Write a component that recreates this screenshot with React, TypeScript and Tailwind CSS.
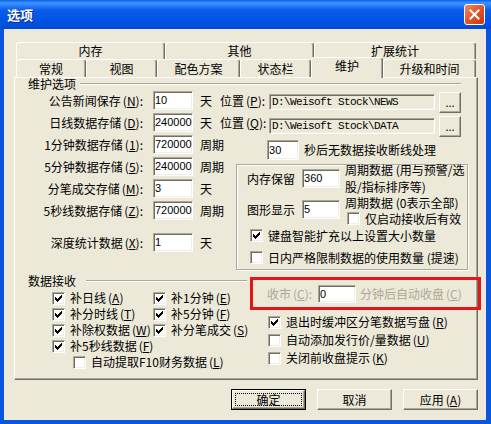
import React from "react";

const RAISED =
  "border border-t-white border-l-white border-r-[#716F64] border-b-[#716F64] shadow-[inset_-1px_-1px_0_#ACA899]";
const SUNKEN =
  "border border-t-[#ACA899] border-l-[#ACA899] border-r-white border-b-white shadow-[inset_1px_1px_0_#716F64,inset_-1px_-1px_0_#F1EFE2]";
const ETCH = "h-[2px] border-t border-t-[#ACA899] border-b border-b-white";
const TAB =
  "border-t border-l border-r border-t-white border-l-white border-r-[#716F64] rounded-t-[3px] shadow-[inset_-1px_0_0_#ACA899] flex justify-center whitespace-nowrap";

// mnemonic key, e.g. (N)
function K({ k }: { k: string }) {
  return (
    <span className="ml-[2px]">
      (<span className="underline underline-offset-[1px]">{k}</span>)
    </span>
  );
}

function Box({ on }: { on?: boolean }) {
  return (
    <span className={`w-[13px] h-[13px] shrink-0 bg-white flex items-center justify-center ${SUNKEN}`}>
      {on && (
        <svg width="7" height="7" viewBox="0 0 7 7" shapeRendering="crispEdges">
          <path
            d="M6 0h1v1h-1zM5 1h2v1h-2zM0 2h1v1h-1zM4 2h3v1h-3zM0 3h2v1h-2zM3 3h3v1h-3zM0 4h5v1h-5zM1 5h3v1h-3zM2 6h1v1h-1z"
            fill="#000"
          />
        </svg>
      )}
    </span>
  );
}

function CheckRow({ on, children, className = "" }: { on?: boolean; children: React.ReactNode; className?: string }) {
  return (
    <div className={`flex items-center gap-[5px] whitespace-nowrap ${className}`}>
      <Box on={on} />
      <span>{children}</span>
    </div>
  );
}

function Field({ value, className = "" }: { value: string; className?: string }) {
  return (
    <div
      className={`bg-white ${SUNKEN} pl-[1px] flex items-center font-['Liberation_Sans',sans-serif] text-[11px] leading-none text-black ${className}`}
    >
      {value}
    </div>
  );
}

function Row({
  label,
  k,
  value,
  unit,
  className = "",
  children,
}: {
  label: string;
  k: string;
  value: string;
  unit: string;
  className?: string;
  children?: React.ReactNode;
}) {
  return (
    <div className={`flex items-start h-[22px] ${className}`}>
      <div className="w-[128px] text-right leading-[19px] whitespace-nowrap">
        {label}
        <K k={k} />:
      </div>
      <Field value={value} className="ml-[10px] w-[40px] h-[19px]" />
      <div className="ml-[7px] leading-[19px] whitespace-nowrap">{unit}</div>
      {children}
    </div>
  );
}

function PathRow({ k, path, top }: { k: string; path: string; top: string }) {
  return (
    <>
      <div className="ml-[8px] w-[49px] leading-[19px] whitespace-nowrap">
        位置
        <K k={k} />:
      </div>
      <div className={`flex items-start ${top}`}>
        <div
          className={`mt-[2px] w-[166px] h-[16px] bg-[#ECE9D8] ${SUNKEN} pl-[2px] flex items-center font-['Liberation_Mono',monospace] text-[11px] tracking-[-0.6px] leading-none whitespace-nowrap overflow-hidden`}
        >
          {path}
        </div>
        <div className={`ml-[4px] w-[22px] h-[21px] ${RAISED} flex items-end justify-center pb-[4px] leading-none text-[11px]`}>
          ...
        </div>
      </div>
    </>
  );
}

export default function App() {
  return (
    <div className="w-[491px] h-[424px] flex flex-col bg-[#0A55E0] font-['Noto_Sans_CJK_SC',sans-serif] text-[12px] leading-[14px] text-black">
      {/* Title bar */}
      <div className="h-[29px] shrink-0 flex items-center justify-between pl-[7px] pr-[6px] bg-[linear-gradient(to_bottom,#0A5FF0_0%,#3D95FF_10%,#0A5CEB_35%,#0054E3_75%,#0049D6_100%)]">
        <span className="text-white font-bold text-[13px] [text-shadow:1px_1px_0_#0A2A8A]">选项</span>
        <div className="w-[21px] h-[21px] rounded-[3px] border border-white bg-[linear-gradient(135deg,#F08C68_0%,#E2582E_45%,#C5380F_100%)] flex items-center justify-center">
          <svg width="11" height="11" viewBox="0 0 11 11">
            <path d="M1.5 1.5l8 8M9.5 1.5l-8 8" stroke="#fff" strokeWidth="2" strokeLinecap="square" />
          </svg>
        </div>
      </div>

      {/* Body */}
      <div className="flex-1 ml-[4px] mr-[5px] mb-[4px] bg-[#ECE9D8] pt-[13px] pl-[10px]">
        {/* Tabs */}
        <div className="ml-[2px] flex h-[17px]">
          <div className={`w-[149px] h-[17px] items-center ${TAB}`}>内存</div>
          <div className={`w-[149px] h-[17px] items-center ${TAB}`}>其他</div>
          <div className={`w-[162px] h-[17px] items-center ${TAB}`}>扩展统计</div>
        </div>
        <div className="ml-[2px] flex h-[18px]">
          <div className={`w-[70px] h-[18px] items-center ${TAB}`}>常规</div>
          <div className={`w-[71px] h-[18px] items-center ${TAB}`}>视图</div>
          <div className={`w-[83px] h-[18px] items-center ${TAB}`}>配色方案</div>
          <div className={`w-[71px] h-[18px] items-center ${TAB}`}>状态栏</div>
          <div className={`relative z-10 -mt-[2px] w-[72px] h-[21px] bg-[#ECE9D8] items-start pt-[1px] ${TAB}`}>维护</div>
          <div className={`w-[93px] h-[18px] items-center ${TAB}`}>升级和时间</div>
        </div>

        {/* Panel */}
        <div className="w-[464px] h-[303px] border border-t-white border-l-white border-r-[#716F64] border-b-[#716F64] shadow-[inset_-1px_-1px_0_#ACA899] flex flex-col">
          <div className="h-[12px] flex items-center pl-[13px] pr-[16px]">
            <span>维护选项</span>
            <div className={`flex-1 ml-[4px] ${ETCH}`} />
          </div>

          <Row label="公告新闻保存" k="N" value="10" unit="天" className="mt-[1px]">
            <PathRow k="P" path={"D:\\Weisoft Stock\\NEWS"} top="mt-[1px]" />
          </Row>
          <Row label="日线数据存储" k="D" value="240000" unit="天">
            <PathRow k="Q" path={"D:\\Weisoft Stock\\DATA"} top="mt-[3px]" />
          </Row>
          <Row label="1分钟数据存储" k="1" value="720000" unit="周期">
            <Field value="30" className="ml-[43px] mt-[5px] w-[32px] h-[20px]" />
            <div className="ml-[5px] mt-[5px] leading-[20px] whitespace-nowrap">秒后无数据接收断线处理</div>
          </Row>

          <div className="flex items-start">
            <div className="w-[221px] shrink-0">
              <Row label="5分钟数据存储" k="5" value="240000" unit="周期" />
              <Row label="分笔成交存储" k="M" value="3" unit="天" />
              <Row label="5秒线数据存储" k="Z" value="720000" unit="周期" />
              <Row label="深度统计数据" k="X" value="1" unit="天" className="mt-[10px]" />
            </div>
            <div className="mt-[7px] w-[232px] h-[106px] shrink-0 border border-[#ACA899] shadow-[inset_1px_1px_0_white,1px_1px_0_white] flex flex-col">
              <div className="flex items-start h-[35px]">
                <div className="ml-[10px] mt-[4px] leading-[19px]">内存保留</div>
                <Field value="360" className="ml-[7px] mt-[4px] w-[38px] h-[19px]" />
                <div className="ml-[5px] -mt-[4px] flex flex-col leading-[17px] whitespace-nowrap">
                  <span>周期数据 (用与预警/选</span>
                  <span>股/指标排序等)</span>
                </div>
              </div>
              <div className="flex items-start">
                <div className="ml-[10px] leading-[19px]">图形显示</div>
                <Field value="5" className="ml-[7px] w-[38px] h-[19px]" />
                <div className="ml-[5px] -mt-[4px] flex flex-col">
                  <div className="leading-[14px] whitespace-nowrap">周期数据 (0表示全部)</div>
                  <CheckRow className="ml-[2px] mt-[2px] h-[13px] gap-[4px]">仅启动接收后有效</CheckRow>
                </div>
              </div>
              <CheckRow on className="ml-[13px] mt-[4px] h-[13px] gap-[4px]">
                键盘智能扩充以上设置大小数量
              </CheckRow>
              <CheckRow className="ml-[13px] mt-[9px] h-[13px] gap-[4px]">
                日内严格限制数据的使用数量 (提速)
              </CheckRow>
            </div>
          </div>

          <div className="flex items-start">
            <div className="w-[235px] shrink-0">
              <div className="mt-[4px] h-[14px] flex items-center pl-[13px]">
                <span>数据接收</span>
                <div className={`flex-1 ml-[10px] mr-[3px] ${ETCH}`} />
              </div>
              <div className="mt-[2px] pl-[37px] grid grid-cols-[101px_auto]">
                <CheckRow on className="h-[16px]">补日线<K k="A" /></CheckRow>
                <CheckRow on className="h-[16px]">补1分钟<K k="E" /></CheckRow>
                <CheckRow on className="h-[16px]">补分时线<K k="T" /></CheckRow>
                <CheckRow on className="h-[16px]">补5分钟<K k="F" /></CheckRow>
                <CheckRow on className="h-[16px]">补除权数据<K k="W" /></CheckRow>
                <CheckRow on className="h-[16px]">补分笔成交<K k="S" /></CheckRow>
                <CheckRow on className="h-[16px]">补5秒线数据<K k="F" /></CheckRow>
              </div>
              <CheckRow className="h-[16px] pl-[58px]">自动提取F10财务数据<K k="L" /></CheckRow>
            </div>
            <div className="flex-1">
              <div className="mt-[7px] w-[231px] h-[33px] border-[3px] border-[#E4161B] flex items-start pt-[5px]">
                <div className="ml-[14px] w-[51px] leading-[18px] text-[#ACA899] whitespace-nowrap">
                  收市
                  <K k="C" />:
                </div>
                <Field value="0" className="w-[38px] h-[18px]" />
                <div className="ml-[4px] leading-[18px] text-[#ACA899] whitespace-nowrap">
                  分钟后自动收盘
                  <K k="C" />
                </div>
              </div>
              <div className="mt-[3px] pl-[18px]">
                <CheckRow on className="h-[18px] gap-[4px]">退出时缓冲区分笔数据写盘<K k="R" /></CheckRow>
                <CheckRow className="h-[18px] gap-[4px]">自动添加发行价/量数据<K k="U" /></CheckRow>
                <CheckRow className="h-[18px] gap-[4px]">关闭前收盘提示<K k="K" /></CheckRow>
              </div>
            </div>
          </div>
        </div>

        {/* Buttons */}
        <div className="w-[464px] mt-[9px] flex justify-end gap-[11px]">
          <div className="w-[75px] h-[21px] border border-black">
            <div className={`w-full h-full ${RAISED} p-[2px]`}>
              <div className="w-full h-full border border-dotted border-black flex items-center justify-center">确定</div>
            </div>
          </div>
          <div className={`w-[75px] h-[21px] ${RAISED} flex items-center justify-center`}>取消</div>
          <div className={`w-[75px] h-[21px] ${RAISED} flex items-center justify-center`}>
            应用<K k="A" />
          </div>
        </div>
      </div>
    </div>
  );
}
